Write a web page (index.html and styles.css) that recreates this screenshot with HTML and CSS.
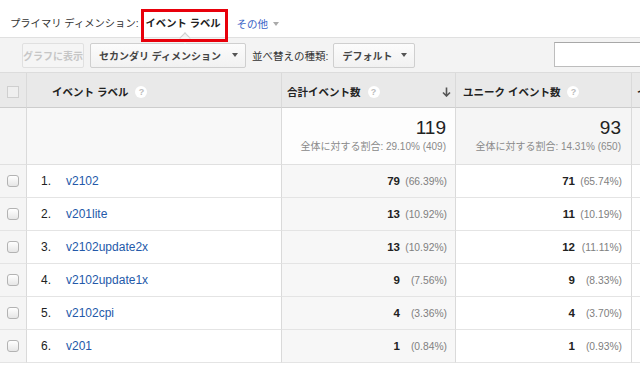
FILE: index.html
```html
<!DOCTYPE html>
<html lang="ja">
<head>
<meta charset="utf-8">
<title>イベント ラベル</title>
<link rel="stylesheet" href="styles.css">
</head>
<body>
<div class="dims">
  <span class="dims-label">プライマリ ディメンション:</span>
  <span class="dims-current">イベント ラベル</span>
  <a class="dims-more" href="#">その他<span class="caret"></span></a>
</div>
<div class="toolbar">
  <button class="btn btn-disabled" type="button">グラフに表示</button>
  <button class="btn btn-select sec" type="button">セカンダリ ディメンション<span class="arrow"></span></button>
  <span class="sort-label">並べ替えの種類:</span>
  <button class="btn btn-select def" type="button">デフォルト<span class="arrow"></span></button>
  <input class="search" type="text">
</div>
<table class="grid">
  <colgroup>
    <col class="c-cb"><col class="c-label"><col class="c-total"><col class="c-unique"><col class="c-more">
  </colgroup>
  <thead>
    <tr>
      <th class="cb"><span class="hcheck"></span></th>
      <th class="h-label"><div class="hcell">イベント ラベル<span class="help">?</span></div></th>
      <th class="h-total"><div class="hcell">合計イベント数<span class="help">?</span><svg class="sort" width="9" height="10" viewBox="0 0 9 10"><path d="M4.5 0.5V9M1 5.5L4.5 9L8 5.5" fill="none" stroke="#555" stroke-width="1.6"/></svg></div></th>
      <th class="h-unique"><div class="hcell">ユニーク イベント数<span class="help">?</span></div></th>
      <th class="h-more"><div class="hcell">イベント値</div></th>
    </tr>
  </thead>
  <tbody>
    <tr class="summary">
      <td class="cb"></td>
      <td class="label"></td>
      <td class="num total"><div class="big">119</div><div class="share">全体に対する割合: 29.10% (409)</div></td>
      <td class="num unique"><div class="big">93</div><div class="share">全体に対する割合: 14.31% (650)</div></td>
      <td class="more"></td>
    </tr>
    <tr class="row">
      <td class="cb"><span class="check"></span></td>
      <td class="label"><span class="idx">1.</span><a href="#">v2102</a></td>
      <td class="num total"><b>79</b><span class="pct">(66.39%)</span></td>
      <td class="num unique"><b>71</b><span class="pct">(65.74%)</span></td>
      <td class="more"></td>
    </tr>
    <tr class="row">
      <td class="cb"><span class="check"></span></td>
      <td class="label"><span class="idx">2.</span><a href="#">v201lite</a></td>
      <td class="num total"><b>13</b><span class="pct">(10.92%)</span></td>
      <td class="num unique"><b>11</b><span class="pct">(10.19%)</span></td>
      <td class="more"></td>
    </tr>
    <tr class="row">
      <td class="cb"><span class="check"></span></td>
      <td class="label"><span class="idx">3.</span><a href="#">v2102update2x</a></td>
      <td class="num total"><b>13</b><span class="pct">(10.92%)</span></td>
      <td class="num unique"><b>12</b><span class="pct">(11.11%)</span></td>
      <td class="more"></td>
    </tr>
    <tr class="row">
      <td class="cb"><span class="check"></span></td>
      <td class="label"><span class="idx">4.</span><a href="#">v2102update1x</a></td>
      <td class="num total"><b>9</b><span class="pct">(7.56%)</span></td>
      <td class="num unique"><b>9</b><span class="pct">(8.33%)</span></td>
      <td class="more"></td>
    </tr>
    <tr class="row">
      <td class="cb"><span class="check"></span></td>
      <td class="label"><span class="idx">5.</span><a href="#">v2102cpi</a></td>
      <td class="num total"><b>4</b><span class="pct">(3.36%)</span></td>
      <td class="num unique"><b>4</b><span class="pct">(3.70%)</span></td>
      <td class="more"></td>
    </tr>
    <tr class="row">
      <td class="cb"><span class="check"></span></td>
      <td class="label"><span class="idx">6.</span><a href="#">v201</a></td>
      <td class="num total"><b>1</b><span class="pct">(0.84%)</span></td>
      <td class="num unique"><b>1</b><span class="pct">(0.93%)</span></td>
      <td class="more"></td>
    </tr>
  </tbody>
</table>
</body>
</html>
```
FILE: styles.css
```css
* { box-sizing: border-box; }
html, body { margin: 0; padding: 0; background: #fff; }
body {
  width: 640px;
  height: 375px;
  overflow: hidden;
  font-family: "Liberation Sans", "Noto Sans CJK JP", sans-serif;
  font-size: 10.5px;
  color: #333;
}

/* primary dimension line */
.dims {
  height: 37px;
  padding: 17px 0 0 10px;
  display: flex;
  align-items: flex-start;
  line-height: 14px;
  white-space: nowrap;
}
.dims-label { font-size: 10.3px; color: #333; }
.dims-current {
  position: relative;
  margin-left: 7px;
  font-weight: bold;
  font-size: 10.3px;
  color: #222;
}
.dims-current::after {
  content: "";
  position: absolute;
  left: -5px;
  right: -7px;
  top: -8px;
  bottom: -11px;
  border: 3px solid #e8000b;
  z-index: 5;
}
.dims-more {
  margin-left: 16px;
  color: #3a63c6;
  text-decoration: none;
  display: flex;
  align-items: center;
}
.caret {
  margin-left: 5px;
  width: 0; height: 0;
  border-top: 4px solid #aaa;
  border-left: 3.5px solid transparent;
  border-right: 3.5px solid transparent;
}

/* toolbar */
.toolbar {
  position: relative;
  height: 35px;
  background: #f3f3f3;
  border-top: 1px solid #e0e0e0;
  display: flex;
  align-items: center;
  padding-left: 22px;
  white-space: nowrap;
}
.toolbar::before {
  content: "";
  position: absolute;
  left: 181px;
  top: -4.5px;
  width: 7px;
  height: 7px;
  background: #f3f3f3;
  border-top: 1px solid #cfcfcf;
  border-left: 1px solid #cfcfcf;
  transform: rotate(45deg);
}
.btn {
  height: 25px;
  border: 1px solid #cfcfcf;
  border-radius: 2px;
  background: linear-gradient(#fcfcfc, #f1f1f1);
  font-family: inherit;
  font-size: 10px;
  font-weight: bold;
  color: #444;
  padding: 0 7px 0 8px;
  display: flex;
  align-items: center;
  margin: 0;
}
.btn-disabled {
  width: 62px;
  padding: 0;
  justify-content: center;
  color: #c6c6c6;
  border-color: #e0e0e0;
  background: #f5f5f5;
}
.sec { width: 156px; margin-left: 6px; }
.def { width: 82px; margin-left: 5px; }
.arrow {
  margin-left: auto;
  width: 0; height: 0;
  border-top: 4px solid #555;
  border-left: 3.5px solid transparent;
  border-right: 3.5px solid transparent;
}
.sort-label { margin-left: 6px; font-size: 10.5px; color: #333; }
.search {
  margin-left: auto;
  margin-right: -20px;
  width: 106px;
  height: 25px;
  margin-top: -2px;
  border: 1px solid #bdbdbd;
  border-top-color: #a8a8a8;
  background: #fff;
  padding: 0;
}

/* table */
.grid {
  width: 752px;
  table-layout: fixed;
  border-collapse: separate;
  border-spacing: 0;
  border-top: 1px solid #dcdcdc;
}
.c-cb { width: 27px; }
.c-label { width: 255px; }
.c-total { width: 174px; }
.c-unique { width: 176px; }
.c-more { width: 120px; }

.grid th, .grid td {
  padding: 0;
  border-right: 1px solid #dadada;
  border-bottom: 1px solid #e4e4e4;
  vertical-align: middle;
}
.grid th {
  height: 35px;
  background: #e9e9e9;
  border-bottom-color: #cdcdcd;
  text-align: left;
  font-weight: bold;
  color: #222;
  font-size: 10.5px;
  padding-top: 3px;
}
.hcell {
  display: flex;
  align-items: center;
  white-space: nowrap;
  line-height: 14px;
}
.h-label .hcell { padding-left: 25px; }
.h-total .hcell { padding-left: 5px; padding-right: 4px; }
.h-unique .hcell { padding-left: 7px; }
.h-more .hcell { padding-left: 5px; }
.help {
  margin-left: 7px;
  width: 12px;
  height: 12px;
  border-radius: 50%;
  background: #fff;
  color: #bcbcbc;
  font-size: 9px;
  font-weight: bold;
  line-height: 12px;
  text-align: center;
}
.sort { margin-left: auto; }

.cb { text-align: center; }
.hcheck {
  display: block;
  margin: 0 0 0 7px;
  width: 12px;
  height: 12px;
  border: 1px solid #cfcfcf;
  background: #efefef;
}
.check {
  display: block;
  margin: 0 0 0 7px;
  width: 12px;
  height: 12px;
  border: 1px solid #b3b3b3;
  border-radius: 3px;
  background: linear-gradient(#ffffff, #e6e6e6);
}

/* summary row */
.summary td {
  height: 57px;
  vertical-align: top;
  background: #f5f5f5;
  border-bottom-color: #e0e0e0;
}
.summary .label { background: #f8f8f8; }
.summary .total { background: #fdfdfd; }
.summary .num { text-align: right; padding-top: 9px; }
.summary .total { padding-right: 9px; }
.summary .unique { padding-right: 10px; }
.big {
  font-size: 19px;
  line-height: 22px;
  color: #222;
}
.share {
  margin-top: 1px;
  font-size: 10px;
  line-height: 14px;
  color: #8a8a8a;
  white-space: nowrap;
}

/* data rows */
.row td {
  height: 33px;
  background: #fff;
  white-space: nowrap;
}
.row .cb { background: #f5f5f5; }
.row .total { background: #f7f7f7; }
.row .num { text-align: right; }
.row .total { padding-right: 8px; }
.row .unique { padding-right: 9px; }
.row .label { padding-left: 14px; font-size: 12px; color: #222; }
.idx { display: inline-block; width: 25px; }
.label a { color: #2459a9; text-decoration: none; }
.num b { font-size: 11.5px; font-weight: bold; color: #222; }
.pct {
  display: inline-block;
  width: 42px;
  margin-left: 5px;
  text-align: right;
  font-size: 10.3px;
  color: #808080;
}
```
